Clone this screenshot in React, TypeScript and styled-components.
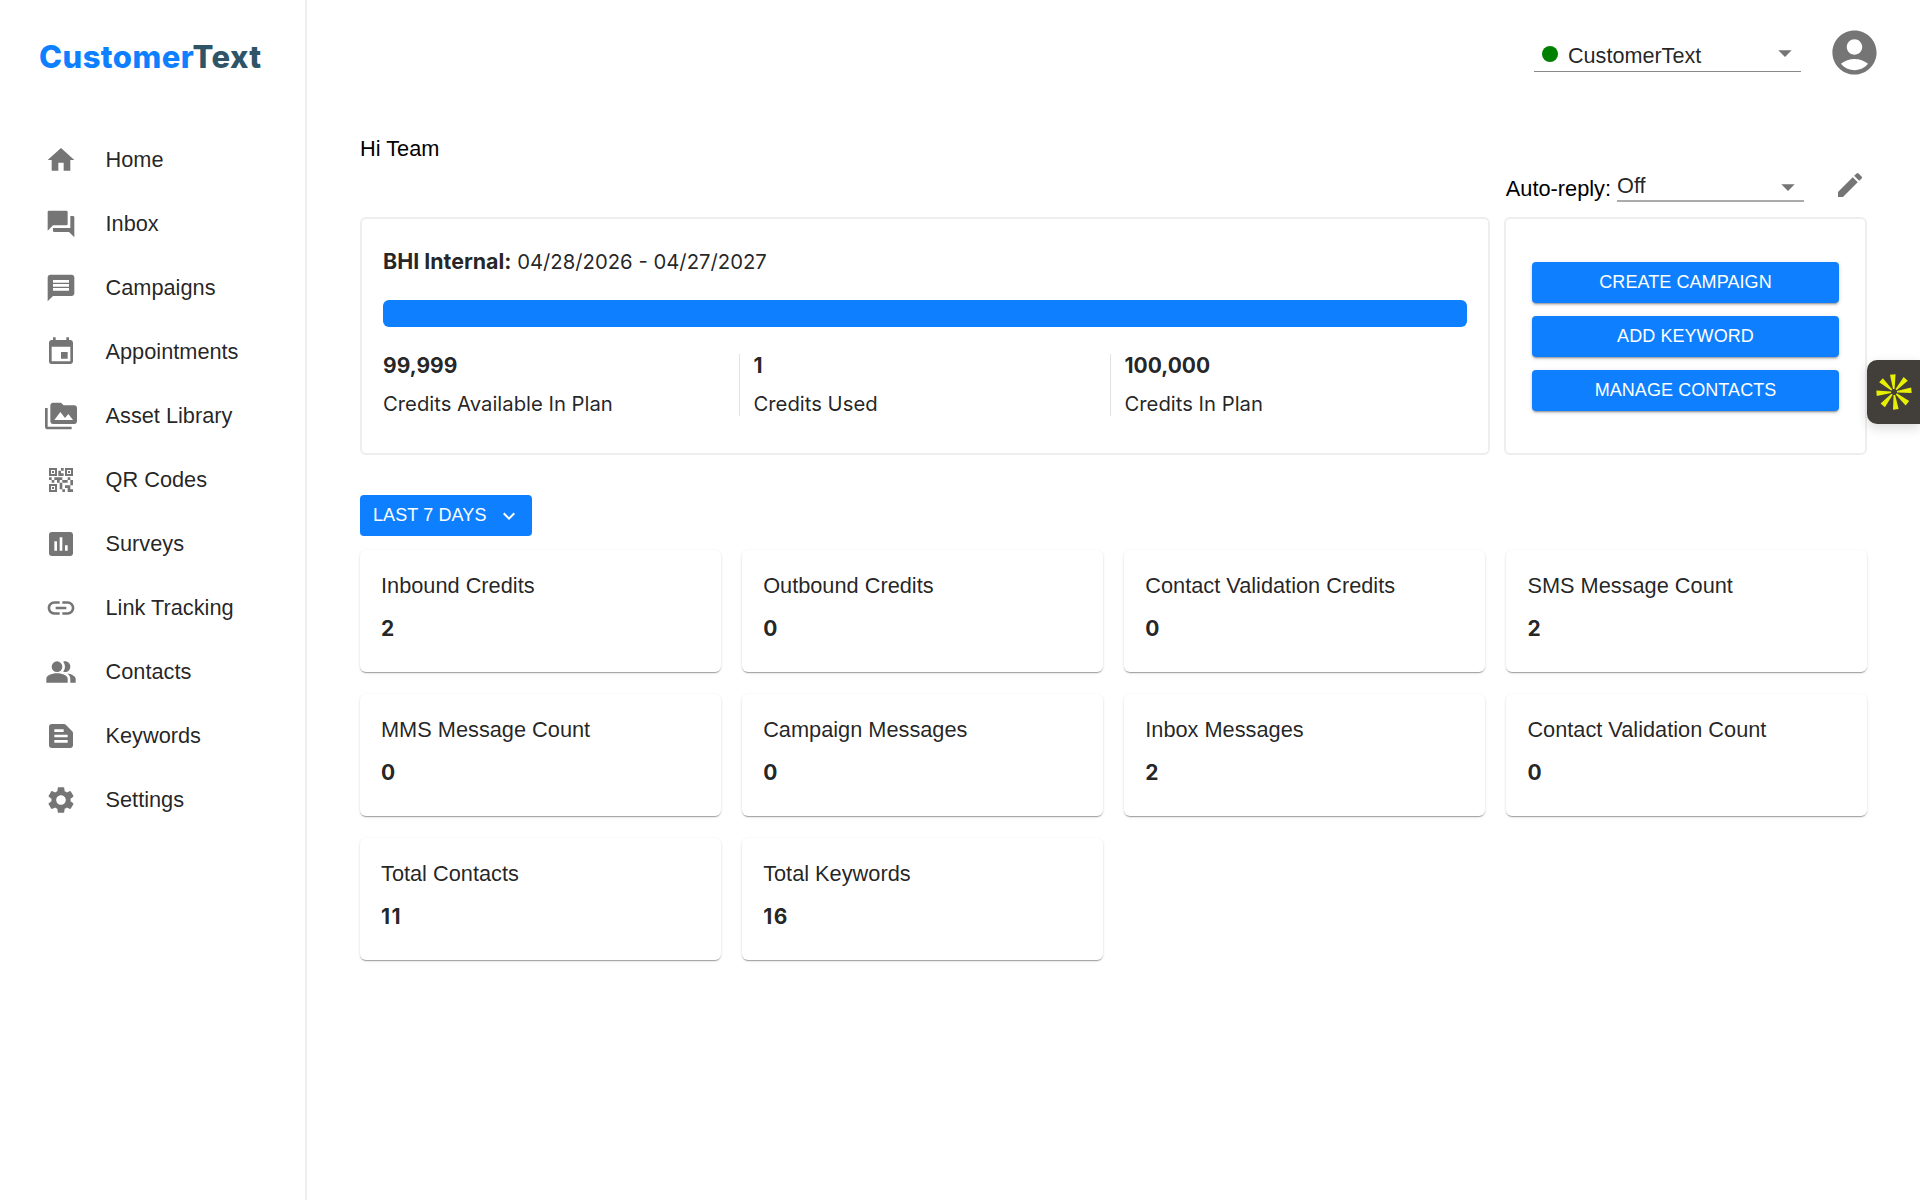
import styled, { createGlobalStyle } from "styled-components";
import {
  MdAccountCircle,
  MdArrowDropDown,
  MdAssessment,
  MdEdit,
  MdEvent,
  MdForum,
  MdHome,
  MdKeyboardArrowDown,
  MdLink,
  MdMessage,
  MdPeopleAlt,
  MdPermMedia,
  MdQrCode2,
  MdSettings,
  MdTextSnippet,
} from "react-icons/md";

const blue = "#0d7fff";
const ink = "rgba(0, 0, 0, 0.87)";
const grey = "#757575";
const helvetica = `"Liberation Sans", Arial, sans-serif`;
const inter = `Inter, "Liberation Sans", sans-serif`;

const GlobalStyle = createGlobalStyle`
  html, body {
    margin: 0;
    padding: 0;
    background: #fff;
  }
  body {
    font-family: ${helvetica};
    color: ${ink};
  }
  * {
    box-sizing: border-box;
  }
`;

const Page = styled.div`
  display: flex;
  height: 1200px;
  overflow: hidden;
  position: relative;
`;

const Sidebar = styled.aside`
  width: 307px;
  flex-shrink: 0;
  border-right: 2px solid #eeeeee;
  padding-top: 37px;
`;

const Logo = styled.div`
  font-family: ${inter};
  font-weight: 800;
  font-size: 31px;
  line-height: 40px;
  padding-left: 39px;
  color: ${blue};
  letter-spacing: 0.45px;

  span {
    color: #2f5468;
  }
`;

const Nav = styled.nav`
  display: flex;
  flex-direction: column;
  margin-top: 51px;
`;

const NavItem = styled.a`
  display: flex;
  align-items: center;
  height: 64px;
  padding-left: 45px;
  font-size: 21.75px;
  color: ${ink};

  svg {
    width: 32px;
    height: 32px;
    color: ${grey};
    flex-shrink: 0;
    margin-right: 28.5px;
  }
`;

const Main = styled.main`
  flex: 1;
  min-width: 0;
  padding: 0 53px;
`;

const TopBar = styled.header`
  display: flex;
  justify-content: flex-end;
  align-items: flex-start;
  height: 134px;
  margin-right: -14px;
  padding-top: 26px;
`;

const AccountSelect = styled.div`
  display: flex;
  align-items: center;
  width: 267px;
  height: 46px;
  border-bottom: 1px solid #8a8a8a;
  font-size: 21.6px;
  padding: 14px 0 0 8px;
  margin: 0 27px 0 0;

  svg {
    width: 32px;
    height: 32px;
    color: ${grey};
    margin-left: auto;
    margin-right: 0;
    margin-top: -6px;
  }
`;

const StatusDot = styled.i`
  width: 16px;
  height: 16px;
  border-radius: 50%;
  background: #008000;
  margin-right: 10px;
  margin-top: -4px;
`;

const Avatar = styled.div`
  color: ${grey};
  line-height: 0;

  svg {
    width: 53px;
    height: 53px;
  }
`;

const Greeting = styled.div`
  font-size: 21.75px;
  line-height: 30px;
  color: #000;
`;

const AutoReplyRow = styled.div`
  display: flex;
  justify-content: flex-end;
  align-items: flex-start;
  height: 54px;
  margin-top: -1px;
  font-size: 21.75px;
  color: #000;
`;

const AutoReplyLabel = styled.span`
  margin: 13px 6px 0 0;
`;

const AutoReplySelect = styled.div`
  display: flex;
  align-items: flex-start;
  width: 187px;
  height: 37px;
  margin-top: 2px;
  border-bottom: 2px solid #ababab;
  color: ${ink};
  padding-top: 8px;

  svg {
    width: 32px;
    height: 32px;
    color: ${grey};
    margin-left: auto;
    margin-top: -2px;
  }
`;

const EditButton = styled.div`
  color: ${grey};
  line-height: 0;
  margin: 6px 1px 0 30px;

  svg {
    width: 32px;
    height: 32px;
  }
`;

const TopCards = styled.section`
  display: grid;
  grid-template-columns: 1130px 363px;
  gap: 14px;
  height: 238px;
`;

const OutlinedCard = styled.div`
  border: 2px solid #eeeeee;
  border-radius: 6px;
`;

const PlanCard = styled(OutlinedCard)`
  padding: 23px 21px 0;
`;

const PlanTitle = styled.div`
  font-family: ${inter};
  font-size: 20.3px;
  line-height: 38px;

  b {
    font-weight: 700;
    font-size: 21.4px;
  }
`;

const Bar = styled.div`
  height: 27px;
  margin-top: 19px;
  border-radius: 6px;
  background: ${blue};
`;

const StatRow = styled.div`
  display: grid;
  grid-template-columns: 355.5px 371px 1fr;
  margin-top: 27px;
`;

const Stat = styled.div<{ $divided?: boolean }>`
  height: 62px;
  padding-left: ${(p) => (p.$divided ? "14px" : "0")};
  border-left: ${(p) => (p.$divided ? "1px solid #e2e2e2" : "none")};
`;

const StatValue = styled.div`
  font-family: ${inter};
  font-weight: 700;
  font-size: 21px;
  line-height: 24px;
`;

const StatLabel = styled.div`
  font-family: ${inter};
  font-size: 20.3px;
  line-height: 30px;
  margin-top: 11px;
`;

const ActionCard = styled(OutlinedCard)`
  display: flex;
  flex-direction: column;
  gap: 13px;
  padding: 43px 26px 0;
`;

const ActionButton = styled.button`
  height: 41px;
  border: none;
  border-radius: 4px;
  background: ${blue};
  color: #fff;
  font-family: ${helvetica};
  font-size: 18px;
  letter-spacing: 0.07px;
  box-shadow: 0 3px 1px -2px rgba(0, 0, 0, 0.2), 0 2px 2px rgba(0, 0, 0, 0.14), 0 1px 5px rgba(0, 0, 0, 0.12);
`;

const RangeButton = styled.button`
  display: flex;
  align-items: center;
  width: 172px;
  height: 41px;
  margin-top: 40px;
  padding: 0 0 0 13px;
  border: none;
  border-radius: 4px;
  background: ${blue};
  color: #fff;
  font-family: ${helvetica};
  font-size: 18px;
  letter-spacing: 0.1px;

  svg {
    width: 24px;
    height: 24px;
    margin-left: 10px;
  }
`;

const MetricGrid = styled.section`
  display: grid;
  grid-template-columns: repeat(4, 1fr);
  gap: 22px 21.5px;
  margin-top: 14px;
`;

const MetricCard = styled.div`
  height: 122px;
  padding: 21px 21px 0;
  border-radius: 6px;
  background: #fff;
  box-shadow: 0 2px 1px -1px rgba(0, 0, 0, 0.2), 0 1px 1px rgba(0, 0, 0, 0.14), 0 1px 3px rgba(0, 0, 0, 0.12);
`;

const MetricLabel = styled.div`
  font-size: 21.75px;
  line-height: 30px;
`;

const MetricValue = styled.div`
  font-family: ${inter};
  font-weight: 700;
  font-size: 21px;
  letter-spacing: 1.5px;
  line-height: 30px;
  margin-top: 13px;
`;

const Widget = styled.div`
  position: absolute;
  top: 360px;
  right: 0;
  width: 53px;
  height: 64px;
  border-radius: 10px 0 0 10px;
  background: #423e3a;
  display: flex;
  align-items: center;
  justify-content: center;
  box-shadow: 0 4px 12px rgba(0, 0, 0, 0.15);
`;

const navItems = [
  { label: "Home", Icon: MdHome },
  { label: "Inbox", Icon: MdForum },
  { label: "Campaigns", Icon: MdMessage },
  { label: "Appointments", Icon: MdEvent },
  { label: "Asset Library", Icon: MdPermMedia },
  { label: "QR Codes", Icon: MdQrCode2 },
  { label: "Surveys", Icon: MdAssessment },
  { label: "Link Tracking", Icon: MdLink },
  { label: "Contacts", Icon: MdPeopleAlt },
  { label: "Keywords", Icon: MdTextSnippet },
  { label: "Settings", Icon: MdSettings },
];

const metrics = [
  { label: "Inbound Credits", value: "2" },
  { label: "Outbound Credits", value: "0" },
  { label: "Contact Validation Credits", value: "0" },
  { label: "SMS Message Count", value: "2" },
  { label: "MMS Message Count", value: "0" },
  { label: "Campaign Messages", value: "0" },
  { label: "Inbox Messages", value: "2" },
  { label: "Contact Validation Count", value: "0" },
  { label: "Total Contacts", value: "11" },
  { label: "Total Keywords", value: "16" },
];

function SparkIcon() {
  const angles = [-4, 42, 84, 130, 174, 220, 266, 312];
  return (
    <svg width="36" height="36" viewBox="0 0 36 36">
      {angles.map((a) => (
        <polygon key={a} points="17.2,15 18.8,15 20.8,0.5 15.2,0.5" fill="#e6f000" transform={`rotate(${a} 18 18)`} />
      ))}
    </svg>
  );
}

export default function App() {
  return (
    <Page>
      <GlobalStyle />
      <Sidebar>
        <Logo>
          Customer<span>Text</span>
        </Logo>
        <Nav>
          {navItems.map(({ label, Icon }) => (
            <NavItem key={label}>
              <Icon />
              {label}
            </NavItem>
          ))}
        </Nav>
      </Sidebar>
      <Main>
        <TopBar>
          <AccountSelect>
            <StatusDot />
            CustomerText
            <MdArrowDropDown />
          </AccountSelect>
          <Avatar>
            <MdAccountCircle />
          </Avatar>
        </TopBar>
        <Greeting>Hi Team</Greeting>
        <AutoReplyRow>
          <AutoReplyLabel>Auto-reply:</AutoReplyLabel>
          <AutoReplySelect>
            Off
            <MdArrowDropDown />
          </AutoReplySelect>
          <EditButton>
            <MdEdit />
          </EditButton>
        </AutoReplyRow>
        <TopCards>
          <PlanCard>
            <PlanTitle>
              <b>BHI Internal:</b> 04/28/2026 - 04/27/2027
            </PlanTitle>
            <Bar />
            <StatRow>
              <Stat>
                <StatValue>99,999</StatValue>
                <StatLabel>Credits Available In Plan</StatLabel>
              </Stat>
              <Stat $divided>
                <StatValue>1</StatValue>
                <StatLabel>Credits Used</StatLabel>
              </Stat>
              <Stat $divided>
                <StatValue>100,000</StatValue>
                <StatLabel>Credits In Plan</StatLabel>
              </Stat>
            </StatRow>
          </PlanCard>
          <ActionCard>
            <ActionButton>CREATE CAMPAIGN</ActionButton>
            <ActionButton>ADD KEYWORD</ActionButton>
            <ActionButton>MANAGE CONTACTS</ActionButton>
          </ActionCard>
        </TopCards>
        <RangeButton>
          LAST 7 DAYS
          <MdKeyboardArrowDown />
        </RangeButton>
        <MetricGrid>
          {metrics.map((m) => (
            <MetricCard key={m.label}>
              <MetricLabel>{m.label}</MetricLabel>
              <MetricValue>{m.value}</MetricValue>
            </MetricCard>
          ))}
        </MetricGrid>
      </Main>
      <Widget>
        <SparkIcon />
      </Widget>
    </Page>
  );
}
